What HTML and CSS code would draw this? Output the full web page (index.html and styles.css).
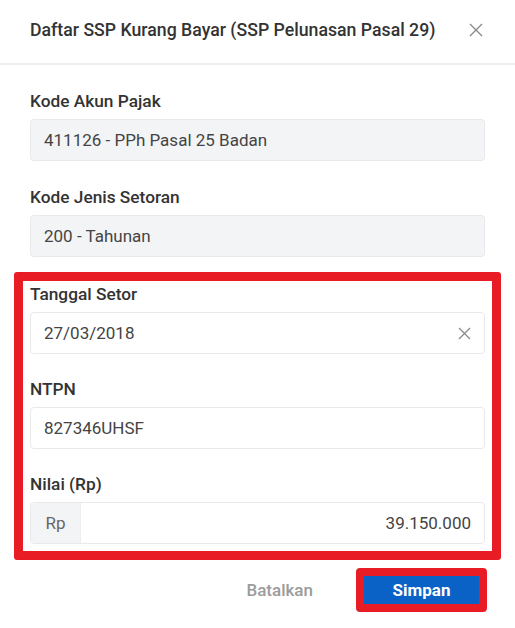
FILE: index.html
```html
<!DOCTYPE html>
<html lang="id">
<head>
<meta charset="utf-8">
<title>Daftar SSP Kurang Bayar</title>
<link rel="stylesheet" href="styles.css">
</head>
<body>
<div class="modal">
  <div class="header">
    <div class="title">Daftar SSP Kurang Bayar (SSP Pelunasan Pasal 29)</div>
    <svg class="close" width="14" height="14" viewBox="0 0 14 14"><path d="M1 1L13 13M13 1L1 13" stroke="#8a8a8a" stroke-width="1.4" fill="none"/></svg>
  </div>
  <div class="form">
    <div class="field">
      <div class="label">Kode Akun Pajak</div>
      <div class="input disabled">411126 - PPh Pasal 25 Badan</div>
    </div>
    <div class="field">
      <div class="label">Kode Jenis Setoran</div>
      <div class="input disabled">200 - Tahunan</div>
    </div>
    <div class="highlight">
      <div class="field">
        <div class="label">Tanggal Setor</div>
        <div class="input with-clear">
          <span>27/03/2018</span>
          <svg width="13" height="13" viewBox="0 0 13 13"><path d="M1 1L12 12M12 1L1 12" stroke="#8a8a8a" stroke-width="1.3" fill="none"/></svg>
        </div>
      </div>
      <div class="field">
        <div class="label">NTPN</div>
        <div class="input">827346UHSF</div>
      </div>
      <div class="field">
        <div class="label">Nilai (Rp)</div>
        <div class="input group">
          <span class="addon">Rp</span>
          <span class="amount">39.150.000</span>
        </div>
      </div>
    </div>
  </div>
  <div class="footer">
    <span class="cancel">Batalkan</span>
    <div class="save-ring"><span class="save">Simpan</span></div>
  </div>
</div>
</body>
</html>
```

FILE: styles.css
```css
html, body {
  margin: 0;
  padding: 0;
  background: #ffffff;
}
body {
  font-family: Roboto, "Noto Sans", "Liberation Sans", sans-serif;
  color: #333333;
  width: 515px;
}
.header {
  height: 63px;
  border-bottom: 2px solid #eeeeee;
  display: flex;
  align-items: center;
  justify-content: space-between;
  padding: 0 32px 0 30px;
}
.title {
  font-size: 17.7px;
  font-weight: 500;
  color: #333333;
  margin-top: -3px;
  white-space: nowrap;
}
.close {
  margin-top: -3px;
}
.form {
  padding: 26px 30px 0;
}
.field + .field {
  margin-top: 26px;
}
.highlight .field + .field {
  margin-top: 25px;
}
.label {
  font-size: 17.3px;
  line-height: 20px;
  font-weight: 500;
  color: #333333;
  margin-bottom: 8px;
}
.input {
  box-sizing: border-box;
  height: 42px;
  border: 1px solid #e8e9ec;
  border-radius: 4px;
  background: #ffffff;
  font-size: 17px;
  color: #444444;
  display: flex;
  align-items: center;
  padding: 0 13px;
}
.input.disabled {
  background: #f3f4f6;
}
.with-clear {
  justify-content: space-between;
}
.group {
  padding: 0;
  overflow: hidden;
}
.addon {
  width: 49px;
  align-self: stretch;
  display: flex;
  align-items: center;
  justify-content: center;
  background: #f3f4f6;
  border-right: 1px solid #eceef0;
  color: #666666;
}
.amount {
  flex: 1;
  text-align: right;
  padding-right: 13px;
}
.highlight {
  margin: 15px -16px 0;
  border: 9px solid #e81c25;
  border-radius: 3px;
  padding: 3px 7px 7px;
}
.footer {
  display: flex;
  justify-content: flex-end;
  align-items: center;
  padding: 8px 28px 0 0;
}
.cancel {
  font-size: 17px;
  font-weight: 500;
  color: #9b9b9b;
  margin-right: 43px;
}
.save-ring {
  border: 8px solid #e81c25;
  border-radius: 4px;
  display: flex;
}
.save {
  width: 115px;
  height: 28px;
  background: #0a61c6;
  color: #ffffff;
  font-size: 17px;
  font-weight: 700;
  display: flex;
  align-items: center;
  justify-content: center;
}
```
